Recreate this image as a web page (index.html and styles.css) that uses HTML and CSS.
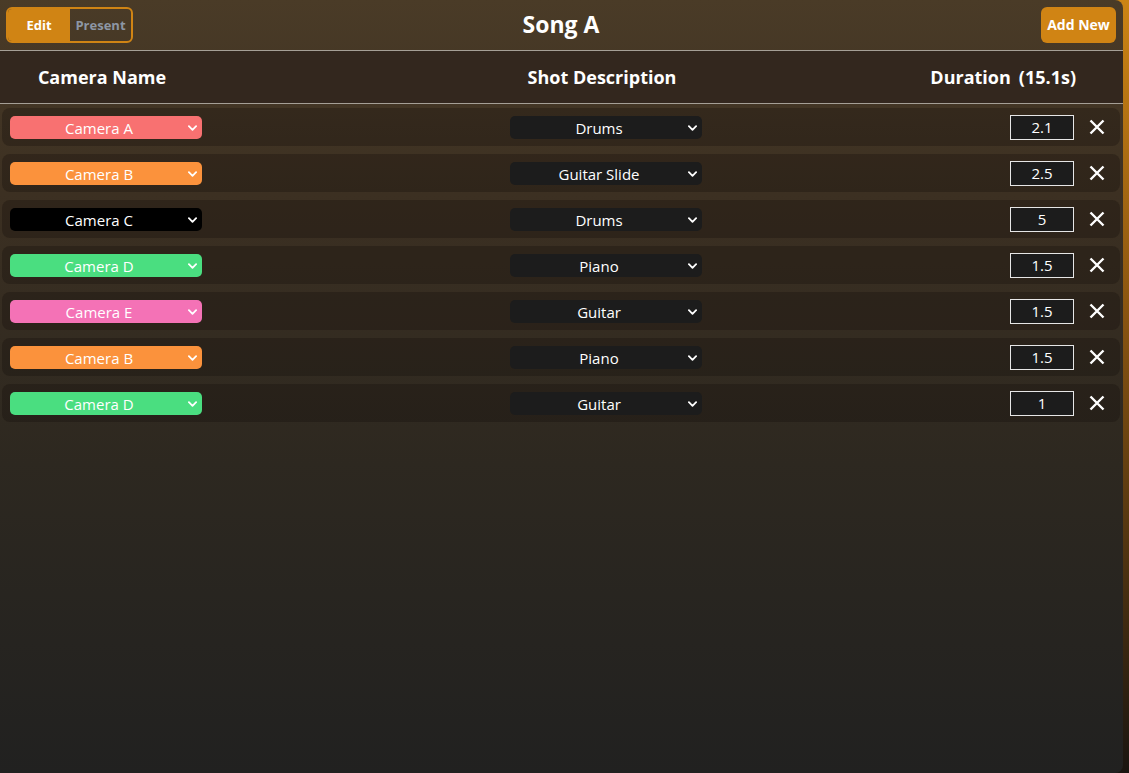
FILE: index.html
```html
<!DOCTYPE html>
<html lang="en">
<head>
<meta charset="utf-8">
<title>Song A</title>
<link rel="stylesheet" href="styles.css">
</head>
<body>
<div class="app">
  <header class="topbar">
    <div class="toggle">
      <button class="toggle-btn active">Edit</button>
      <button class="toggle-btn">Present</button>
    </div>
    <h1 class="title">Song A</h1>
    <div class="right"><button class="add-btn">Add New</button></div>
  </header>
  <div class="colhead">
    <div class="ch ch-cam">Camera Name</div>
    <div class="ch ch-shot">Shot Description</div>
    <div class="ch ch-dur"><span>Duration</span><span>(15.1s)</span></div>
  </div>
  <div class="rows">
    <div class="row">
      <div class="cell-cam"><div class="sel-wrap"><select class="sel cam-a"><option>Camera A</option></select><svg class="chev" viewBox="0 0 10 6"><path d="M1 1l4 4 4-4"/></svg></div></div>
      <div class="cell-shot"><div class="sel-wrap"><select class="sel shot"><option>Drums</option></select><svg class="chev" viewBox="0 0 10 6"><path d="M1 1l4 4 4-4"/></svg></div></div>
      <div class="cell-dur"><input class="dur" value="2.1"><svg class="x" viewBox="0 0 16 16"><path d="M1.5 1.5l13 13M14.5 1.5l-13 13"/></svg></div>
    </div>
    <div class="row">
      <div class="cell-cam"><div class="sel-wrap"><select class="sel cam-b"><option>Camera B</option></select><svg class="chev" viewBox="0 0 10 6"><path d="M1 1l4 4 4-4"/></svg></div></div>
      <div class="cell-shot"><div class="sel-wrap"><select class="sel shot"><option>Guitar Slide</option></select><svg class="chev" viewBox="0 0 10 6"><path d="M1 1l4 4 4-4"/></svg></div></div>
      <div class="cell-dur"><input class="dur" value="2.5"><svg class="x" viewBox="0 0 16 16"><path d="M1.5 1.5l13 13M14.5 1.5l-13 13"/></svg></div>
    </div>
    <div class="row">
      <div class="cell-cam"><div class="sel-wrap"><select class="sel cam-c"><option>Camera C</option></select><svg class="chev" viewBox="0 0 10 6"><path d="M1 1l4 4 4-4"/></svg></div></div>
      <div class="cell-shot"><div class="sel-wrap"><select class="sel shot"><option>Drums</option></select><svg class="chev" viewBox="0 0 10 6"><path d="M1 1l4 4 4-4"/></svg></div></div>
      <div class="cell-dur"><input class="dur" value="5"><svg class="x" viewBox="0 0 16 16"><path d="M1.5 1.5l13 13M14.5 1.5l-13 13"/></svg></div>
    </div>
    <div class="row">
      <div class="cell-cam"><div class="sel-wrap"><select class="sel cam-d"><option>Camera D</option></select><svg class="chev" viewBox="0 0 10 6"><path d="M1 1l4 4 4-4"/></svg></div></div>
      <div class="cell-shot"><div class="sel-wrap"><select class="sel shot"><option>Piano</option></select><svg class="chev" viewBox="0 0 10 6"><path d="M1 1l4 4 4-4"/></svg></div></div>
      <div class="cell-dur"><input class="dur" value="1.5"><svg class="x" viewBox="0 0 16 16"><path d="M1.5 1.5l13 13M14.5 1.5l-13 13"/></svg></div>
    </div>
    <div class="row">
      <div class="cell-cam"><div class="sel-wrap"><select class="sel cam-e"><option>Camera E</option></select><svg class="chev" viewBox="0 0 10 6"><path d="M1 1l4 4 4-4"/></svg></div></div>
      <div class="cell-shot"><div class="sel-wrap"><select class="sel shot"><option>Guitar</option></select><svg class="chev" viewBox="0 0 10 6"><path d="M1 1l4 4 4-4"/></svg></div></div>
      <div class="cell-dur"><input class="dur" value="1.5"><svg class="x" viewBox="0 0 16 16"><path d="M1.5 1.5l13 13M14.5 1.5l-13 13"/></svg></div>
    </div>
    <div class="row">
      <div class="cell-cam"><div class="sel-wrap"><select class="sel cam-b"><option>Camera B</option></select><svg class="chev" viewBox="0 0 10 6"><path d="M1 1l4 4 4-4"/></svg></div></div>
      <div class="cell-shot"><div class="sel-wrap"><select class="sel shot"><option>Piano</option></select><svg class="chev" viewBox="0 0 10 6"><path d="M1 1l4 4 4-4"/></svg></div></div>
      <div class="cell-dur"><input class="dur" value="1.5"><svg class="x" viewBox="0 0 16 16"><path d="M1.5 1.5l13 13M14.5 1.5l-13 13"/></svg></div>
    </div>
    <div class="row">
      <div class="cell-cam"><div class="sel-wrap"><select class="sel cam-d"><option>Camera D</option></select><svg class="chev" viewBox="0 0 10 6"><path d="M1 1l4 4 4-4"/></svg></div></div>
      <div class="cell-shot"><div class="sel-wrap"><select class="sel shot"><option>Guitar</option></select><svg class="chev" viewBox="0 0 10 6"><path d="M1 1l4 4 4-4"/></svg></div></div>
      <div class="cell-dur"><input class="dur" value="1"><svg class="x" viewBox="0 0 16 16"><path d="M1.5 1.5l13 13M14.5 1.5l-13 13"/></svg></div>
    </div>
  </div>
</div>
</body>
</html>
```

FILE: styles.css
```css
* { box-sizing: border-box; }
html, body { margin: 0; height: 100%; }
body {
  font-family: "Open Sans", "Noto Sans", sans-serif;
  background: linear-gradient(180deg, #cc8414 0%, #8a5510 40%, #1a1510 100%);
  color: #fff;
  overflow: hidden;
}
.app {
  width: 1123px;
  height: 773px;
  border-radius: 0 8px 8px 0;
  background: linear-gradient(180deg, #4a3b27 0%, #3c3022 25%, #2d2820 60%, #212120 100%);
  display: flex;
  flex-direction: column;
}
.topbar {
  height: 51px;
  display: grid;
  grid-template-columns: 1fr auto 1fr;
  align-items: center;
  padding: 0 7px 1px 6px;
  border-bottom: 1px solid #a59f96;
}
.right { display: flex; justify-content: flex-end; }
.toggle {
  display: flex;
  width: 127px;
  height: 36px;
  border: 2px solid #d08414;
  border-radius: 6px;
  overflow: hidden;
}
.toggle-btn {
  border: 0;
  background: transparent;
  font-family: inherit;
  font-weight: 700;
  font-size: 13px;
  color: #8d96a4;
  padding: 0;
  flex: 1;
}
.toggle-btn.active {
  background: #d08414;
  color: #fff;
  flex: 0 0 62px;
}
.title {
  margin: 0;
  font-size: 23px;
  font-weight: 700;
  line-height: 1;
  padding-bottom: 1px;
}
.add-btn {
  width: 75px;
  height: 36px;
  border: 0;
  border-radius: 6px;
  background: #d08414;
  color: #fff;
  font-family: inherit;
  font-weight: 700;
  font-size: 14px;
  padding: 0;
}
.colhead {
  height: 53px;
  display: flex;
  align-items: center;
  background: #33271e;
  border-bottom: 1px solid #a59f96;
  font-weight: 700;
  font-size: 18px;
  white-space: nowrap;
}
.ch-cam { flex: 0 0 204px; text-align: center; }
.ch-shot { flex: 0 0 796px; text-align: center; }
.ch-dur {
  flex: 1 1 0;
  min-width: 0;
  display: flex;
  justify-content: flex-end;
  gap: 8px;
  padding-right: 47px;
}
.rows {
  display: flex;
  flex-direction: column;
  gap: 8px;
  padding: 4px 3px 0 2px;
}
.row {
  height: 38px;
  display: flex;
  align-items: center;
  padding: 0 6px 0 8px;
  border-radius: 8px;
  background: rgba(20, 14, 10, 0.3);
}
.cell-cam { width: 192px; }
.cell-shot { flex: 1; display: flex; justify-content: center; }
.cell-dur {
  width: 104px;
  display: flex;
  align-items: center;
  gap: 15px;
}
.sel-wrap {
  position: relative;
  width: 192px;
  height: 23px;
}
.sel {
  appearance: none;
  -webkit-appearance: none;
  width: 100%;
  height: 100%;
  border: 0;
  border-radius: 5px;
  color: #fff;
  font-family: inherit;
  font-size: 15px;
  text-align: center;
  text-align-last: center;
  padding: 1px 14px 0 0;
  line-height: 22px;
}
.chev {
  position: absolute;
  right: 5px;
  top: 9px;
  width: 9px;
  height: 6px;
  fill: none;
  stroke: #fff;
  stroke-width: 2;
  stroke-linecap: round;
  stroke-linejoin: round;
}
.cam-a { background: #f87171; }
.cam-b { background: #fb923c; }
.cam-c { background: #000; }
.cam-d { background: #4ade80; }
.cam-e { background: #f472b6; }
.shot { background: #1c1c1c; }
.dur {
  width: 64px;
  height: 25px;
  border: 1px solid #e6e6e6;
  background: #1c1c1c;
  color: #fff;
  font-family: inherit;
  font-size: 15px;
  text-align: center;
  padding: 0;
}
.x {
  width: 16px;
  height: 16px;
  fill: none;
  stroke: #fff;
  stroke-width: 2.4;
}
```
